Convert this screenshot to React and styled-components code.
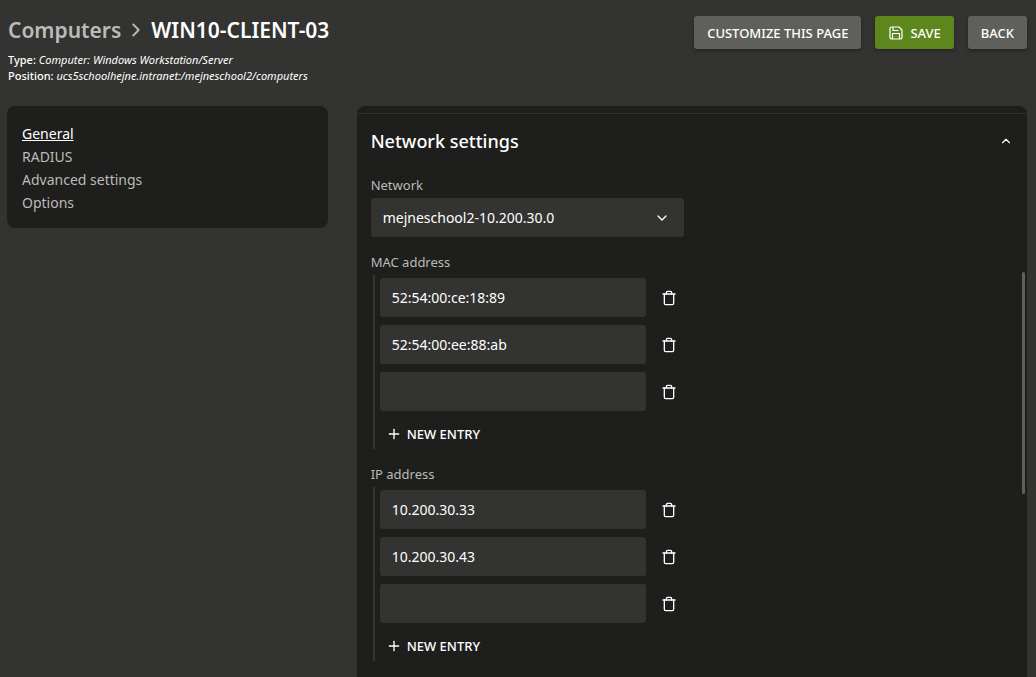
import React, { useState } from 'react'
import styled, { createGlobalStyle } from 'styled-components'
import { FiChevronDown, FiChevronRight, FiChevronUp, FiPlus, FiTrash } from 'react-icons/fi'

const navItems = ["General", "RADIUS", "Advanced settings", "Options"]

const SaveIcon = () => (
    <svg width="16" height="16" viewBox="0 0 16 16" fill="none" stroke="currentColor" strokeWidth="1.2" strokeLinejoin="round" aria-hidden="true">
        <path d="M3.500 2h7.500l3 3v7.500a1.500 1.500 0 0 1-1.500 1.500h-9a1.500 1.500 0 0 1-1.500-1.500v-9a1.500 1.500 0 0 1 1.500-1.500z" />
        <path d="M5 2v3.500h5.500" />
        <path d="M4.500 14v-5.500h7v5.500" />
    </svg>
)

const MultiInput = ({ label, initial }) => {
    const [values, setValues] = useState(initial)

    const change = (index, value) => {
        setValues(values.map((el, i) => (i === index ? value : el)))
    }
    const remove = (index) => {
        setValues(values.filter((el, i) => i !== index))
    }

    return (
        <Field>
            <Label as="span">{label}</Label>
            <Entries role="group" aria-label={label}>
                {
                    values.map((value, i) => (
                        <Entry key={i}>
                            <Input aria-label={`${label} ${i + 1}`} value={value} onChange={(e) => {
                                change(i, e.target.value)
                            }} />
                            <IconButton aria-label="Remove" onClick={() => {
                                remove(i)
                            }}><FiTrash size={16} /></IconButton>
                        </Entry>
                    ))
                }
                <NewEntry onClick={() => {
                    setValues([...values, ""])
                }}><FiPlus size={16} />NEW ENTRY</NewEntry>
            </Entries>
        </Field>
    )
}

const App = () => {
    const [active, setActive] = useState("General")
    const [open, setOpen] = useState(true)

    return (
        <Container>
            <GlobalStyle />
            <Header>
                <div>
                    <Title>
                        <Crumb href="#computers">Computers</Crumb>
                        <FiChevronRight size={22} />
                        <span>WIN10-CLIENT-03</span>
                    </Title>
                    <Info><b>Type:</b> <i>Computer: Windows Workstation/Server</i></Info>
                    <Info><b>Position:</b> <i>ucs5schoolhejne.intranet:/mejneschool2/computers</i></Info>
                </div>
                <Actions>
                    <Button>CUSTOMIZE THIS PAGE</Button>
                    <Button $primary><SaveIcon />SAVE</Button>
                    <Button>BACK</Button>
                </Actions>
            </Header>
            <Content>
                <Sidebar>
                    {
                        navItems.map((item) => (
                            <NavLink key={item} href="#" $active={item === active} onClick={() => {
                                setActive(item)
                            }}>{item}</NavLink>
                        ))
                    }
                </Sidebar>
                <Panel>
                    <Section>
                        <SectionHeader aria-expanded={open} onClick={() => {
                            setOpen(!open)
                        }}>
                            Network settings
                            <FiChevronUp size={14} />
                        </SectionHeader>
                        {open && (
                            <Form>
                                <Field>
                                    <Label htmlFor="network">Network</Label>
                                    <SelectBox>
                                        <Select id="network">
                                            <option>mejneschool2-10.200.30.0</option>
                                        </Select>
                                        <FiChevronDown size={16} />
                                    </SelectBox>
                                </Field>
                                <MultiInput label="MAC address" initial={["52:54:00:ce:18:89", "52:54:00:ee:88:ab", ""]} />
                                <MultiInput label="IP address" initial={["10.200.30.33", "10.200.30.43", ""]} />
                            </Form>
                        )}
                    </Section>
                    <ScrollThumb />
                </Panel>
            </Content>
        </Container>
    )
}

export default App

const GlobalStyle = createGlobalStyle`
    * {
        box-sizing: border-box;
    }
    body {
        margin: 0;
        background: #333331;
        color: #fff;
        font-family: "Noto Sans", "Open Sans", sans-serif;
        font-size: 14px;
    }
    button, input, select {
        border: none;
        font: inherit;
        color: inherit;
    }
    button {
        cursor: pointer;
    }
`
const Container = styled.div`
    height: 100vh;
    padding: 16px 9px 0 7px;
    display: flex;
    flex-direction: column;
    gap: 22px;
    overflow: hidden;
`
const Header = styled.header`
    padding-left: 1px;
    display: flex;
    justify-content: space-between;
    align-items: flex-start;
`
const Title = styled.h1`
    margin: 0 0 8px;
    display: flex;
    align-items: center;
    gap: 4px;
    font-size: 21px;
    line-height: 28px;
    font-weight: 600;

    svg {
        color: #bbbbb7;
    }
`
const Crumb = styled.a`
    color: #bbbbb7;
    text-decoration: none;
`
const Info = styled.div`
    font-size: 11px;
    line-height: 16px;

    b {
        font-weight: 500;
    }
`
const Actions = styled.div`
    display: flex;
    gap: 14px;
`
const Button = styled.button`
    height: 33px;
    padding: 0 13px;
    display: flex;
    align-items: center;
    gap: 6px;
    border-radius: 3px;
    background: ${({ $primary }) => ($primary ? "#5d861d" : "#5f5f5b")};
    box-shadow: 0 2px 4px rgba(0, 0, 0, 0.3);
    font-size: 13px;
    font-weight: 500;
`
const Content = styled.div`
    flex: 1;
    min-height: 0;
    display: grid;
    grid-template-columns: repeat(12, 1fr);
    column-gap: 29px;
    align-items: start;
`
const Sidebar = styled.nav`
    grid-column: span 4;
    padding: 16px 15px 14px;
    display: flex;
    flex-direction: column;
    align-items: flex-start;
    border-radius: 8px;
    background: #1e1e1c;
`
const NavLink = styled.a`
    line-height: 23px;
    color: ${({ $active }) => ($active ? "#fff" : "#bbbbb7")};
    text-decoration: ${({ $active }) => ($active ? "underline" : "none")};
`
const Panel = styled.main`
    grid-column: span 8;
    position: relative;
    height: 100%;
    padding-top: 7px;
    border-radius: 8px 8px 0 0;
    background: #1e1e1c;
    overflow: hidden;
`
const Section = styled.section`
    border-top: 1px solid #333331;
`
const SectionHeader = styled.button`
    width: 100%;
    height: 54px;
    padding: 0 14px;
    display: flex;
    align-items: center;
    justify-content: space-between;
    background: none;
    font-size: 18px;
    font-weight: 500;
`
const Form = styled.div`
    padding: 8px 14px;
    display: flex;
    flex-direction: column;
    gap: 16px;
`
const Field = styled.div`
    display: flex;
    flex-direction: column;
    gap: 4px;
`
const Label = styled.label`
    font-size: 13px;
    line-height: 18px;
    color: #bbbbb7;
`
const SelectBox = styled.div`
    position: relative;
    width: 313px;

    svg {
        position: absolute;
        right: 14px;
        top: 12px;
        pointer-events: none;
    }
`
const Select = styled.select`
    appearance: none;
    display: block;
    width: 100%;
    height: 39px;
    padding: 0 12px;
    border-radius: 3px;
    background: #333331;
`
const Entries = styled.div`
    margin-left: 2px;
    padding: 3px 0 0 5px;
    display: flex;
    flex-direction: column;
    align-items: flex-start;
    gap: 8px;
    border-left: 2px solid #333331;
`
const Entry = styled.div`
    display: flex;
    align-items: center;
    gap: 7px;
`
const Input = styled.input`
    width: 266px;
    height: 39px;
    padding: 0 12px;
    border-radius: 3px;
    background: #333331;
`
const IconButton = styled.button`
    width: 32px;
    height: 32px;
    padding: 0;
    display: flex;
    align-items: center;
    justify-content: center;
    background: none;
`
const NewEntry = styled.button`
    height: 30px;
    padding: 0 6px;
    display: flex;
    align-items: center;
    gap: 5px;
    background: none;
    font-size: 13px;
    font-weight: 500;
`
const ScrollThumb = styled.div`
    position: absolute;
    top: 29%;
    right: 2px;
    width: 3px;
    height: 39%;
    border-radius: 2px;
    background: #5f5f5b;
`
